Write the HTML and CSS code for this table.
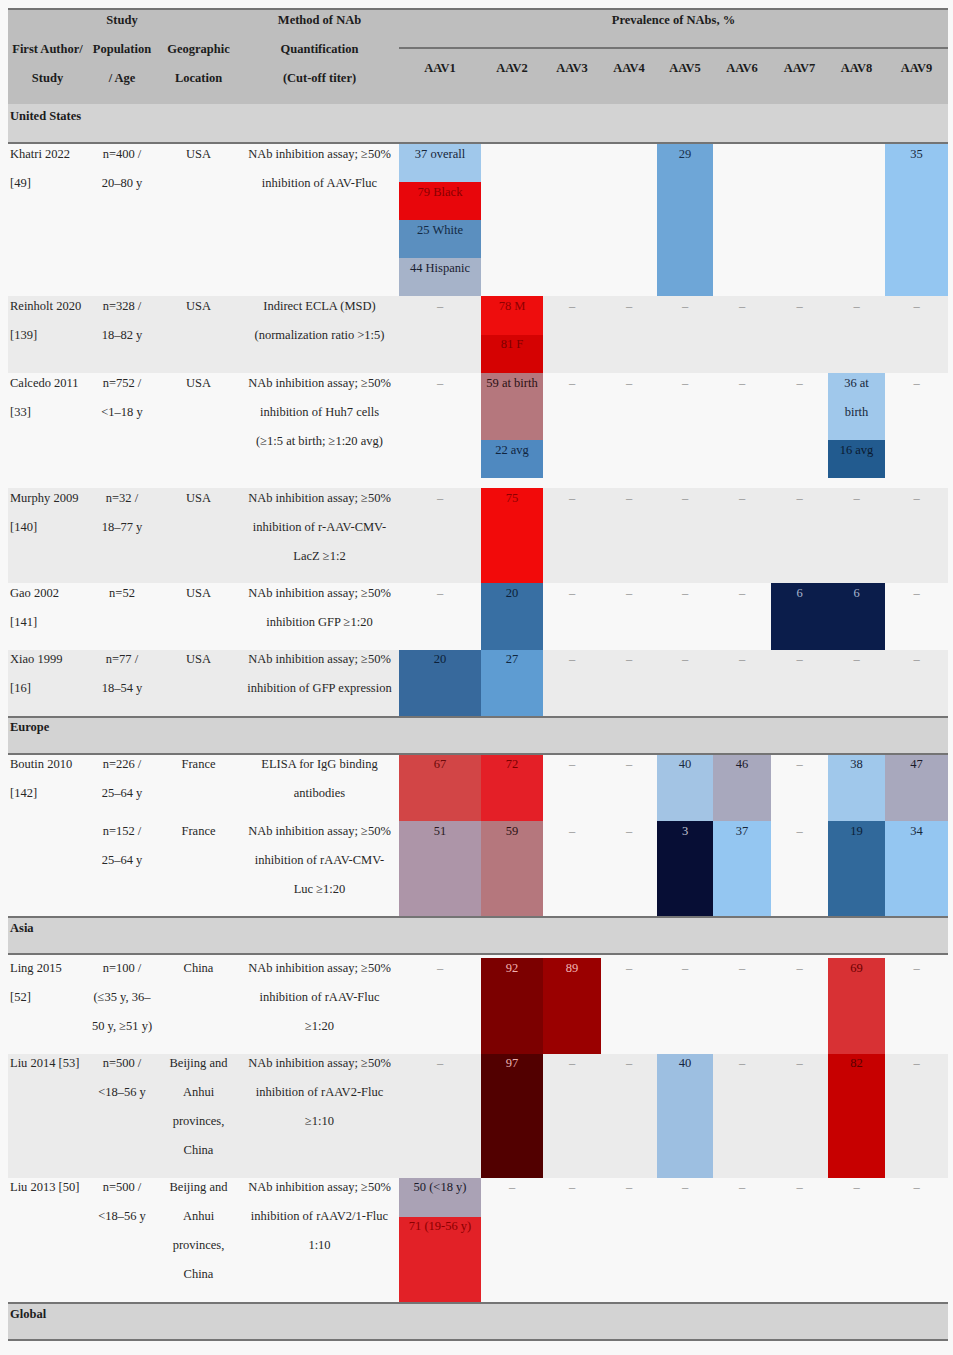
FILE: index.html
```html
<!DOCTYPE html>
<html lang="en">
<head>
<meta charset="utf-8">
<title>Prevalence of NAbs</title>
<link rel="stylesheet" href="styles.css">
</head>
<body>
<div class="table">
  <div class="head">
    <div class="hc hs pad1"><p>First Author/<br>Study</p></div>
    <div class="hc hs"><p>Study<br>Population<br>/ Age</p></div>
    <div class="hc hs pad1"><p>Geographic<br>Location</p></div>
    <div class="hc hs"><p>Method of NAb<br>Quantification<br>(Cut-off titer)</p></div>
    <div class="hc prev"><p>Prevalence of NAbs, %</p></div>
    <div class="hc aav"><p>AAV1</p></div>
    <div class="hc aav"><p>AAV2</p></div>
    <div class="hc aav"><p>AAV3</p></div>
    <div class="hc aav"><p>AAV4</p></div>
    <div class="hc aav"><p>AAV5</p></div>
    <div class="hc aav"><p>AAV6</p></div>
    <div class="hc aav"><p>AAV7</p></div>
    <div class="hc aav"><p>AAV8</p></div>
    <div class="hc aav"><p>AAV9</p></div>
  </div>

  <div class="band first"><p>United States</p></div>

  <!-- Khatri -->
  <div class="row">
    <div class="c l"><p>Khatri 2022<br>[49]</p></div>
    <div class="c"><p>n=400 /<br>20–80 y</p></div>
    <div class="c"><p>USA</p></div>
    <div class="c"><p>NAb inhibition assay; ≥50%<br>inhibition of AAV-Fluc</p></div>
    <div class="stk">
      <div class="c sub h38 lb1"><p>37 overall</p></div>
      <div class="c sub h38 red1"><p>79 Black</p></div>
      <div class="c sub h38 sb"><p>25 White</p></div>
      <div class="c sub h38 gb"><p>44 Hispanic</p></div>
    </div>
    <div></div><div></div><div></div>
    <div class="c mb"><p>29</p></div>
    <div></div><div></div><div></div>
    <div class="c lb2"><p>35</p></div>
  </div>

  <!-- Reinholt -->
  <div class="row alt">
    <div class="c l"><p>Reinholt 2020<br>[139]</p></div>
    <div class="c"><p>n=328 /<br>18–82 y</p></div>
    <div class="c"><p>USA</p></div>
    <div class="c"><p>Indirect ECLA (MSD)<br>(normalization ratio &gt;1:5)</p></div>
    <div class="c d"><p>–</p></div>
    <div class="stk">
      <div class="c sub h385 red2"><p>78 M</p></div>
      <div class="c sub h385 red3"><p>81 F</p></div>
    </div>
    <div class="c d"><p>–</p></div>
    <div class="c d"><p>–</p></div>
    <div class="c d"><p>–</p></div>
    <div class="c d"><p>–</p></div>
    <div class="c d"><p>–</p></div>
    <div class="c d"><p>–</p></div>
    <div class="c d"><p>–</p></div>
  </div>

  <!-- Calcedo -->
  <div class="row tall">
    <div class="c l"><p>Calcedo 2011<br>[33]</p></div>
    <div class="c"><p>n=752 /<br>&lt;1–18 y</p></div>
    <div class="c"><p>USA</p></div>
    <div class="c"><p>NAb inhibition assay; ≥50%<br>inhibition of Huh7 cells<br>(≥1:5 at birth; ≥1:20 avg)</p></div>
    <div class="c d"><p>–</p></div>
    <div class="stk top">
      <div class="c sub h67 rose"><p>59 at birth</p></div>
      <div class="c sub h38 blu"><p>22 avg</p></div>
    </div>
    <div class="c d"><p>–</p></div>
    <div class="c d"><p>–</p></div>
    <div class="c d"><p>–</p></div>
    <div class="c d"><p>–</p></div>
    <div class="c d"><p>–</p></div>
    <div class="stk top">
      <div class="c sub h67 lb1"><p>36 at<br>birth</p></div>
      <div class="c sub h38 db"><p>16 avg</p></div>
    </div>
    <div class="c d"><p>–</p></div>
  </div>

  <!-- Murphy -->
  <div class="row alt">
    <div class="c l"><p>Murphy 2009<br>[140]</p></div>
    <div class="c"><p>n=32 /<br>18–77 y</p></div>
    <div class="c"><p>USA</p></div>
    <div class="c"><p>NAb inhibition assay; ≥50%<br>inhibition of r-AAV-CMV-<br>LacZ ≥1:2</p></div>
    <div class="c d"><p>–</p></div>
    <div class="c red4"><p>75</p></div>
    <div class="c d"><p>–</p></div>
    <div class="c d"><p>–</p></div>
    <div class="c d"><p>–</p></div>
    <div class="c d"><p>–</p></div>
    <div class="c d"><p>–</p></div>
    <div class="c d"><p>–</p></div>
    <div class="c d"><p>–</p></div>
  </div>

  <!-- Gao -->
  <div class="row">
    <div class="c l"><p>Gao 2002<br>[141]</p></div>
    <div class="c"><p>n=52</p></div>
    <div class="c"><p>USA</p></div>
    <div class="c"><p>NAb inhibition assay; ≥50%<br>inhibition GFP ≥1:20</p></div>
    <div class="c d"><p>–</p></div>
    <div class="c b20"><p>20</p></div>
    <div class="c d"><p>–</p></div>
    <div class="c d"><p>–</p></div>
    <div class="c d"><p>–</p></div>
    <div class="c d"><p>–</p></div>
    <div class="c navy"><p>6</p></div>
    <div class="c navy"><p>6</p></div>
    <div class="c d"><p>–</p></div>
  </div>

  <!-- Xiao -->
  <div class="row alt">
    <div class="c l"><p>Xiao 1999<br>[16]</p></div>
    <div class="c"><p>n=77 /<br>18–54 y</p></div>
    <div class="c"><p>USA</p></div>
    <div class="c"><p>NAb inhibition assay; ≥50%<br>inhibition of GFP expression</p></div>
    <div class="c b20x"><p>20</p></div>
    <div class="c b27"><p>27</p></div>
    <div class="c d"><p>–</p></div>
    <div class="c d"><p>–</p></div>
    <div class="c d"><p>–</p></div>
    <div class="c d"><p>–</p></div>
    <div class="c d"><p>–</p></div>
    <div class="c d"><p>–</p></div>
    <div class="c d"><p>–</p></div>
  </div>

  <div class="band"><p>Europe</p></div>

  <!-- Boutin 1 -->
  <div class="row">
    <div class="c l"><p>Boutin 2010<br>[142]</p></div>
    <div class="c"><p>n=226 /<br>25–64 y</p></div>
    <div class="c"><p>France</p></div>
    <div class="c"><p>ELISA for IgG binding<br>antibodies</p></div>
    <div class="c r67"><p>67</p></div>
    <div class="c r72"><p>72</p></div>
    <div class="c d"><p>–</p></div>
    <div class="c d"><p>–</p></div>
    <div class="c b40"><p>40</p></div>
    <div class="c g46"><p>46</p></div>
    <div class="c d"><p>–</p></div>
    <div class="c lb1"><p>38</p></div>
    <div class="c g46"><p>47</p></div>
  </div>

  <!-- Boutin 2 -->
  <div class="row">
    <div class="c l"></div>
    <div class="c"><p>n=152 /<br>25–64 y</p></div>
    <div class="c"><p>France</p></div>
    <div class="c"><p>NAb inhibition assay; ≥50%<br>inhibition of rAAV-CMV-<br>Luc ≥1:20</p></div>
    <div class="c g51"><p>51</p></div>
    <div class="c rose"><p>59</p></div>
    <div class="c d"><p>–</p></div>
    <div class="c d"><p>–</p></div>
    <div class="c navy2"><p>3</p></div>
    <div class="c lb2"><p>37</p></div>
    <div class="c d"><p>–</p></div>
    <div class="c b19"><p>19</p></div>
    <div class="c lb2"><p>34</p></div>
  </div>

  <div class="band"><p>Asia</p></div>

  <!-- Ling -->
  <div class="row gap">
    <div class="c l"><p>Ling 2015<br>[52]</p></div>
    <div class="c"><p>n=100 /<br>(≤35 y, 36–<br>50 y, ≥51 y)</p></div>
    <div class="c"><p>China</p></div>
    <div class="c"><p>NAb inhibition assay; ≥50%<br>inhibition of rAAV-Fluc<br>≥1:20</p></div>
    <div class="c d"><p>–</p></div>
    <div class="c dr92"><p>92</p></div>
    <div class="c dr89"><p>89</p></div>
    <div class="c d"><p>–</p></div>
    <div class="c d"><p>–</p></div>
    <div class="c d"><p>–</p></div>
    <div class="c d"><p>–</p></div>
    <div class="c r69"><p>69</p></div>
    <div class="c d"><p>–</p></div>
  </div>

  <!-- Liu 2014 -->
  <div class="row alt">
    <div class="c l"><p>Liu 2014 [53]</p></div>
    <div class="c"><p>n=500 /<br>&lt;18–56 y</p></div>
    <div class="c"><p>Beijing and<br>Anhui<br>provinces,<br>China</p></div>
    <div class="c"><p>NAb inhibition assay; ≥50%<br>inhibition of rAAV2-Fluc<br>≥1:10</p></div>
    <div class="c d"><p>–</p></div>
    <div class="c dr97"><p>97</p></div>
    <div class="c d"><p>–</p></div>
    <div class="c d"><p>–</p></div>
    <div class="c b40b"><p>40</p></div>
    <div class="c d"><p>–</p></div>
    <div class="c d"><p>–</p></div>
    <div class="c r82"><p>82</p></div>
    <div class="c d"><p>–</p></div>
  </div>

  <!-- Liu 2013 -->
  <div class="row">
    <div class="c l"><p>Liu 2013 [50]</p></div>
    <div class="c"><p>n=500 /<br>&lt;18–56 y</p></div>
    <div class="c"><p>Beijing and<br>Anhui<br>provinces,<br>China</p></div>
    <div class="c"><p>NAb inhibition assay; ≥50%<br>inhibition of rAAV2/1-Fluc<br>1:10</p></div>
    <div class="stk">
      <div class="c sub h39 g50"><p>50 (&lt;18 y)</p></div>
      <div class="c sub grow r71"><p>71 (19-56 y)</p></div>
    </div>
    <div class="c d"><p>–</p></div>
    <div class="c d"><p>–</p></div>
    <div class="c d"><p>–</p></div>
    <div class="c d"><p>–</p></div>
    <div class="c d"><p>–</p></div>
    <div class="c d"><p>–</p></div>
    <div class="c d"><p>–</p></div>
    <div class="c d"><p>–</p></div>
  </div>

  <div class="band"><p>Global</p></div>
</div>
</body>
</html>
```

FILE: styles.css
```css
:root {
  --cols: 79px 70px 83px 159px 82px 62px 58px 56px 56px 58px 57px 57px 63px;
  --line: #747474;
}

html, body {
  margin: 0;
}

body {
  background: #f8f8f8;
  padding: 8px;
  font-family: "Liberation Serif", "Times New Roman", serif;
  font-size: 12.5px;
  color: #272727;
}

.table {
  width: 940px;
  border-top: 2px solid var(--line);
}

p {
  margin: -4.5px 0 0;
}

/* header */
.head {
  display: grid;
  grid-template-columns: var(--cols);
  grid-template-rows: 37px 57px;
  background: #bebebe;
  font-weight: bold;
  color: #1c1c1c;
  white-space: nowrap;
}

.hc {
  line-height: 29px;
  text-align: center;
  padding: 0 1px;
  box-sizing: border-box;
}

.hs {
  grid-row: 1 / 3;
}

.pad1 {
  padding-top: 29px;
}

.prev {
  grid-column: 5 / 14;
  grid-row: 1;
}

.aav {
  grid-row: 2;
  border-top: 2px solid var(--line);
  padding-top: 9px;
}

/* section bands */
.band {
  background: #d3d3d3;
  border-top: 2px solid var(--line);
  border-bottom: 2px solid var(--line);
  height: 35px;
  padding: 0 2px;
  line-height: 29px;
  font-weight: bold;
  color: #1c1c1c;
}

.band.first {
  border-top: 0;
  height: 38px;
  padding-top: 2px;
  box-sizing: border-box;
  height: 40px;
}

/* body rows */
.row {
  display: grid;
  grid-template-columns: var(--cols);
  background: #f8f8f8;
}

.row.alt {
  background: #ebebeb;
}

.row.tall {
  min-height: 115px;
}

.row.gap {
  margin-top: 3px;
}

.c {
  padding: 0 2px 12.75px;
  line-height: 29px;
  text-align: center;
  white-space: nowrap;
}

.c.l {
  text-align: left;
}

.c.d {
  color: #8c8c8c;
}

.stk {
  display: flex;
  flex-direction: column;
}

.stk.top {
  align-self: start;
}

.sub {
  box-sizing: border-box;
}

.h38 { height: 38px; }
.h385 { height: 38.5px; }
.h39 { height: 39px; }
.h67 { height: 67px; }
.grow { flex: 1; }

/* value colours */
.lb1 { background: #a0c8eb; color: #17263a; }
.lb2 { background: #94c6f1; color: #17263a; }
.red1 { background: #e8060b; color: #8a0000; }
.red2 { background: #ee0d0d; color: #8e0000; }
.red3 { background: #d50202; color: #7c0000; }
.red4 { background: #f20a0a; color: #8e0000; }
.sb { background: #5b8fbf; color: #132a44; }
.gb { background: #a6b3c9; color: #1a2030; }
.mb { background: #6ea6d7; color: #17304e; }
.rose { background: #b5777d; color: #2c1214; }
.blu { background: #4f89c0; color: #102540; }
.db { background: #225b8f; color: #0a1a30; }
.b20 { background: #386fa3; color: #0c1f38; }
.b20x { background: #37699c; color: #0c1f38; }
.b27 { background: #5e9cd2; color: #0f2740; }
.navy { background: #0b1d4b; color: #a8b6cf; }
.navy2 { background: #070e35; color: #c2c6d4; }
.r67 { background: #d24546; color: #6a0a0a; }
.r72 { background: #e41f27; color: #7a0000; }
.b40 { background: #a3c4e4; color: #1a2a40; }
.b40b { background: #9dbfe1; color: #132340; }
.g46 { background: #a8a8bd; color: #1a1a2a; }
.g51 { background: #ad95a8; color: #2a1a22; }
.g50 { background: #aaa2b5; color: #1a1a2a; }
.b19 { background: #31699b; color: #0c1f38; }
.dr92 { background: #7c0000; color: #f0b0b0; }
.dr89 { background: #9a0000; color: #f0b4b4; }
.dr97 { background: #520000; color: #e8b0b0; }
.r69 { background: #d83134; color: #6a0000; }
.r82 { background: #c70000; color: #5a0000; }
.r71 { background: #e22127; color: #8a0000; }
```
